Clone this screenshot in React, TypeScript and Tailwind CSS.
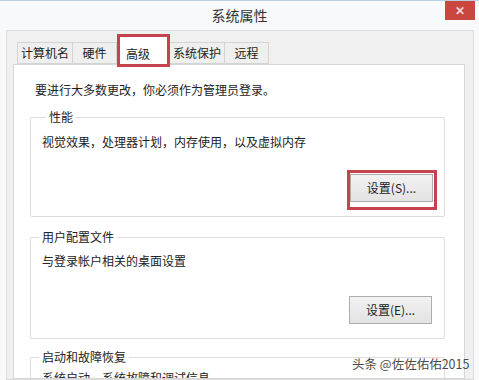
import React from 'react';

const font = { fontFamily: '"Noto Sans CJK SC", "Microsoft YaHei", sans-serif' };

const tabs = [
  { label: '计算机名', w: 'w-[56px]' },
  { label: '硬件', w: 'w-[45px]' },
  { label: '高级', w: 'w-[53px]', active: true },
  { label: '系统保护', w: 'w-[56px]' },
  { label: '远程', w: 'w-[45px]' },
];

function Tab({ label, w, active }: { label: string; w: string; active?: boolean }) {
  if (active) {
    return (
      <div
        className={`${w} relative z-10 -mb-[3px] flex h-[33px] shrink-0 flex-col border-[3px] border-[#c5434c] bg-white pt-[9px] pl-[6px] text-[12px] leading-[16px] text-[#222]`}
      >
        {label}
      </div>
    );
  }
  return (
    <div
      className={`${w} -ml-px flex h-[22px] shrink-0 items-center justify-center border border-[#d4d4d4] bg-[#efefef] text-[12px] leading-[16px] text-[#222] first:ml-0`}
    >
      {label}
    </div>
  );
}

function WinButton({ label }: { label: string }) {
  return (
    <button
      type="button"
      className="h-[28px] w-[83px] border border-[#adadad] bg-gradient-to-b from-[#f2f2f2] to-[#e3e3e3] text-[12px] leading-[16px] text-[#222]"
    >
      {label}
    </button>
  );
}

export default function App() {
  return (
    <div
      style={font}
      className="relative flex h-[380px] w-[479px] flex-col overflow-hidden border-t border-[#b9cfe6] bg-[#f8f9fb]"
    >
      {/* title bar */}
      <div className="relative flex h-[29px] shrink-0 items-center justify-center text-[14px] text-[#333]">
        系统属性
        <div className="absolute top-[-1px] right-[4px] flex h-[20px] w-[30px] items-center justify-center bg-[#c9473f] text-[12px] font-bold leading-none text-[#f0d6d6]">
          ✕
        </div>
      </div>

      {/* dialog body */}
      <div className="ml-[6px] flex min-h-0 w-[468px] flex-1 flex-col border border-[#dcdcdc] bg-[#f0f0f0] pl-[6px] pr-[8px]">
        <div className="flex h-[33px] shrink-0 items-end pl-[4px]">
          {tabs.map((t) => (
            <Tab key={t.label} {...t} />
          ))}
        </div>

        <div className="flex min-h-0 flex-1 flex-col overflow-hidden border border-[#d7d7d7] bg-white pt-[17px] pl-[21px] pr-[19px] text-[12px] leading-[16px] text-[#222]">
          <p className="shrink-0">要进行大多数更改，你必须作为管理员登录。</p>

          <fieldset className="mt-[11px] -ml-[5px] flex shrink-0 flex-col rounded-[2px] border border-[#dcdcdc] pl-[11px] pr-[7px] pb-[6px]">
            <legend className="ml-[4px] px-[3px]">性能</legend>
            <p className="mt-[9px]">视觉效果，处理器计划，内存使用，以及虚拟内存</p>
            <div className="mt-[20px] flex justify-end">
              <div className="h-[40px] w-[90px] border-[3px] border-[#c5434c] pl-0 pt-px">
                <WinButton label="设置(S)..." />
              </div>
            </div>
          </fieldset>

          <fieldset className="mt-[12px] -ml-[5px] flex shrink-0 flex-col rounded-[2px] border border-[#dcdcdc] pl-[11px] pr-[12px] pb-[14px]">
            <legend className="ml-[-3px] px-[3px]">用户配置文件</legend>
            <p className="mt-[8px]">与登录帐户相关的桌面设置</p>
            <div className="mt-[27px] flex justify-end">
              <WinButton label="设置(E)..." />
            </div>
          </fieldset>

          <fieldset className="mt-[10px] -ml-[5px] flex shrink-0 flex-col rounded-[2px] border border-[#dcdcdc] pl-[11px] pr-[12px] pb-[14px]">
            <legend className="ml-[-3px] px-[3px]">启动和故障恢复</legend>
            <p className="mt-[5px]">系统启动，系统故障和调试信息</p>
          </fieldset>
        </div>
      </div>

      {/* watermark */}
      <div className="absolute top-[354px] left-[352px] text-[12.5px] leading-[18px] text-[#4a4a4a] [text-shadow:0_0_2px_#fff]">
        头条 @佐佐佑佑2015
      </div>
    </div>
  );
}
